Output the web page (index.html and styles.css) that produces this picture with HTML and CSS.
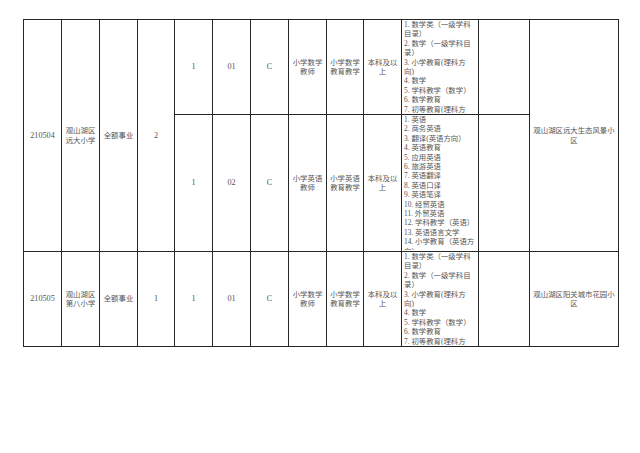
FILE: index.html
```html
<!DOCTYPE html>
<html lang="zh-CN">
<head>
<meta charset="utf-8">
<title>岗位表</title>
<link rel="stylesheet" href="styles.css">
</head>
<body>
<table class="roster">
  <colgroup>
    <col class="w38"><col class="w38"><col class="w38"><col class="w37">
    <col class="w38"><col class="w38"><col class="w38"><col class="w38">
    <col class="w37"><col class="w38"><col class="w77"><col class="w51"><col class="w89">
  </colgroup>
  <tr class="row-s">
    <td rowspan="2" class="num">210504</td>
    <td rowspan="2">观山湖区远大小学</td>
    <td rowspan="2">全额事业</td>
    <td rowspan="2" class="num">2</td>
    <td class="num">1</td>
    <td class="num">01</td>
    <td class="num">C</td>
    <td>小学数学教师</td>
    <td>小学数学教育教学</td>
    <td>本科及以上</td>
    <td class="list"><div class="clip clip-s">1. 数学类（一级学科<br>目录）<br>2. 数学（一级学科目<br>录）<br>3. 小学教育(理科方<br>向)<br>4. 数学<br>5. 学科教学（数学）<br>6. 数学教育<br>7. 初等教育(理科方</div></td>
    <td></td>
    <td rowspan="2">观山湖区远大生态风景小区</td>
  </tr>
  <tr class="row-l">
    <td class="num">1</td>
    <td class="num">02</td>
    <td class="num">C</td>
    <td>小学英语教师</td>
    <td>小学英语教育教学</td>
    <td>本科及以上</td>
    <td class="list"><div class="clip clip-l">1. 英语<br>2. 商务英语<br>3. 翻译(英语方向）<br>4. 英语教育<br>5. 应用英语<br>6. 旅游英语<br>7. 英语翻译<br>8. 英语口译<br>9. 英语笔译<br>10. 经贸英语<br>11. 外贸英语<br>12. 学科教学（英语）<br>13. 英语语言文学<br>14. 小学教育（英语方<br>向）</div></td>
    <td></td>
  </tr>
  <tr class="row-s">
    <td class="num">210505</td>
    <td>观山湖区第八小学</td>
    <td>全额事业</td>
    <td class="num">1</td>
    <td class="num">1</td>
    <td class="num">01</td>
    <td class="num">C</td>
    <td>小学数学教师</td>
    <td>小学数学教育教学</td>
    <td>本科及以上</td>
    <td class="list"><div class="clip clip-s">1. 数学类（一级学科<br>目录）<br>2. 数学（一级学科目<br>录）<br>3. 小学教育(理科方<br>向)<br>4. 数学<br>5. 学科教学（数学）<br>6. 数学教育<br>7. 初等教育(理科方</div></td>
    <td></td>
    <td>观山湖区阳关城市花园小区</td>
  </tr>
</table>
</body>
</html>
```
FILE: styles.css
```css
html, body {
  margin: 0;
  padding: 0;
  background: #ffffff;
}

body {
  padding: 19px 0 0 23px;
  font-family: "Liberation Serif", "Noto Sans CJK SC", serif;
  color: #555555;
}

.roster {
  border-collapse: collapse;
  table-layout: fixed;
  width: 596px;
  font-size: 7.4px;
  line-height: 9.4px;
}

.w37 { width: 37px; }
.w38 { width: 38px; }
.w51 { width: 51px; }
.w77 { width: 77px; }
.w89 { width: 89px; }

.roster td {
  border: 1px solid #262626;
  padding: 0 2px;
  text-align: center;
  vertical-align: middle;
  overflow: hidden;
}

.row-s { height: 95px; }
.row-l { height: 137px; }

.roster td.num {
  font-size: 8.2px;
}

.roster td.list {
  text-align: left;
  vertical-align: top;
  padding: 0 0 0 2px;
}

.clip {
  overflow: hidden;
  white-space: nowrap;
}

.clip-s { height: 93px; }
.clip-l { height: 135px; }
```
